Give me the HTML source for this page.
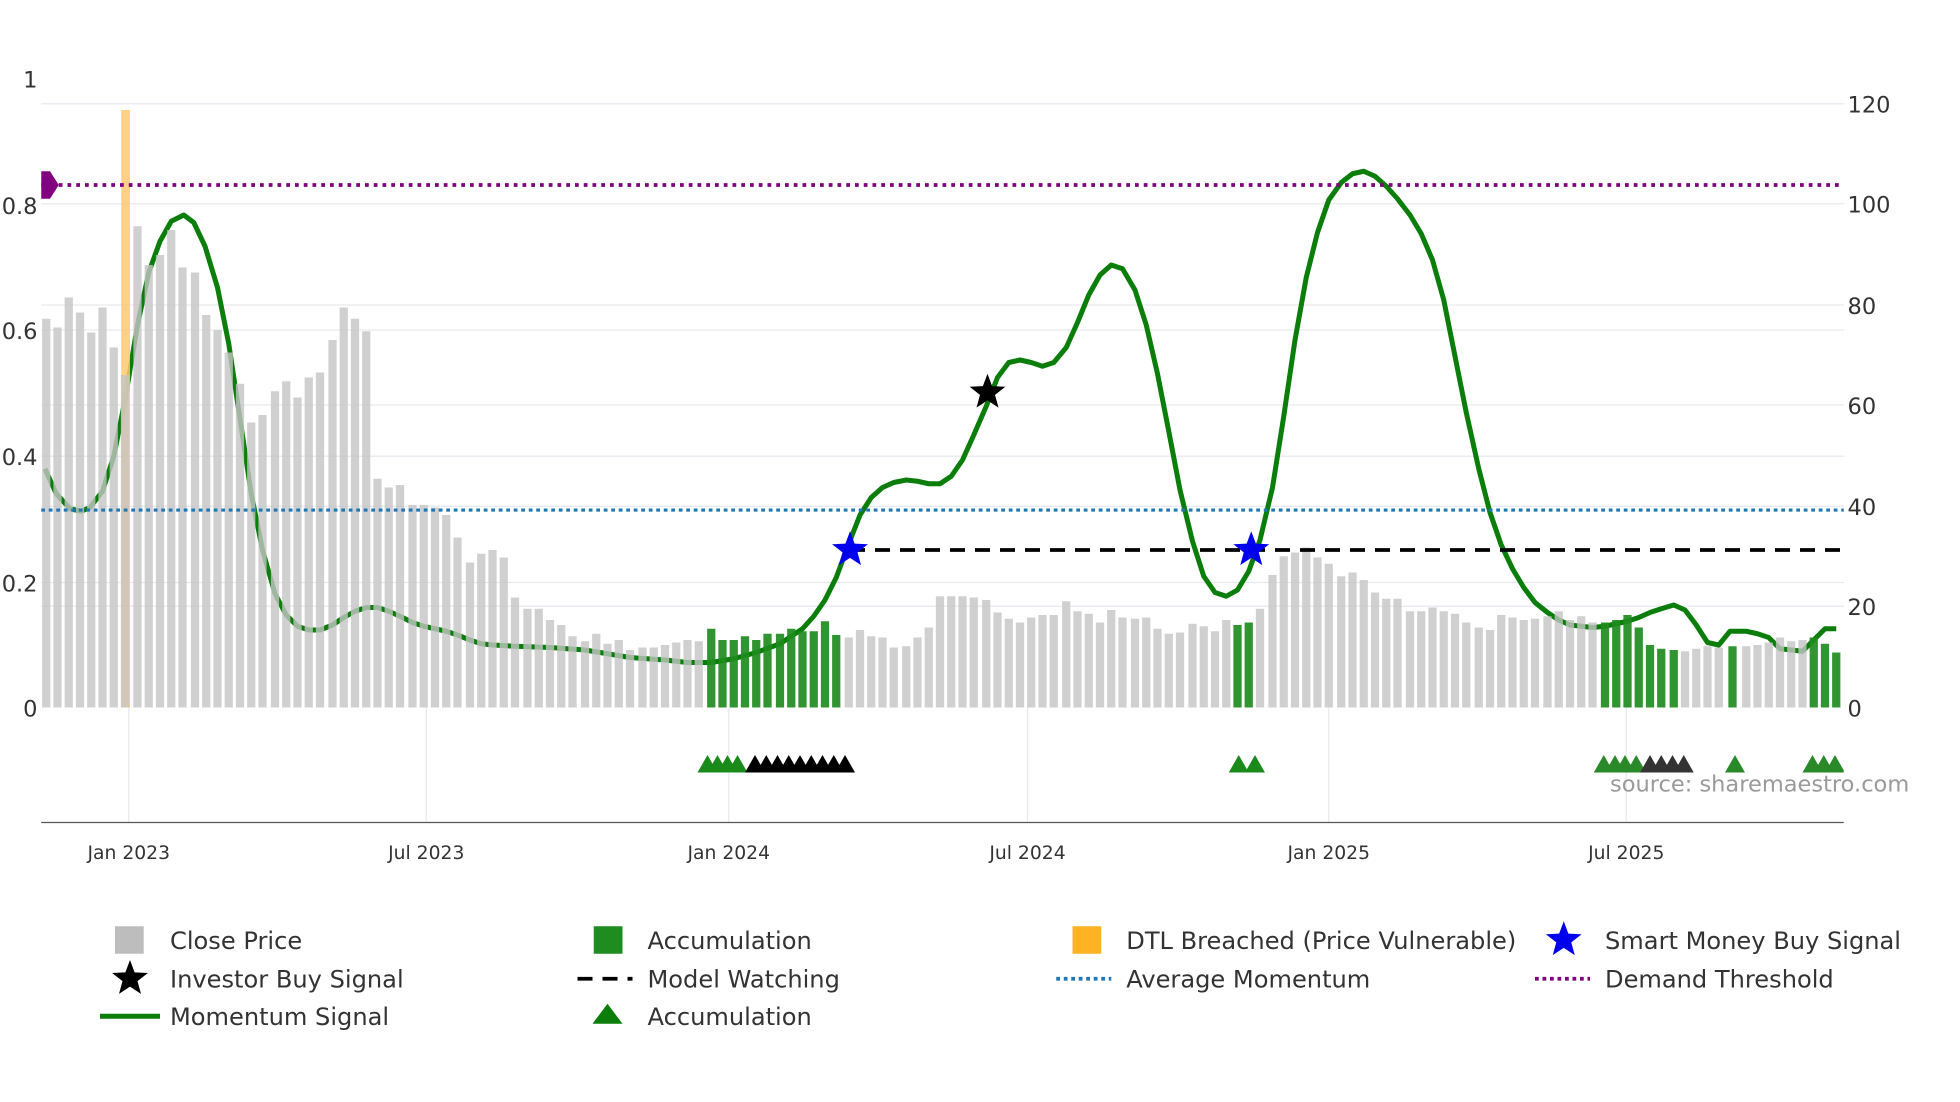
<!DOCTYPE html>
<html><head><meta charset="utf-8"><style>
html,body{margin:0;padding:0;background:#fff;width:1960px;height:1102px;overflow:hidden}
svg{display:block}
text{font-family:"DejaVu Sans","Liberation Sans",sans-serif;fill:#333}
</style></head><body>
<svg id="s" width="1960" height="1102" viewBox="0 0 1568 881.6" preserveAspectRatio="none" xmlns="http://www.w3.org/2000/svg">
<defs><clipPath id="pc"><rect x="33" y="0" width="1442" height="700"/></clipPath></defs>
<g stroke="#e6e9ee" stroke-width="1">
<line x1="33" x2="1475" y1="83" y2="83"/><line x1="33" x2="1475" y1="163" y2="163"/><line x1="33" x2="1475" y1="244" y2="244"/><line x1="33" x2="1475" y1="324" y2="324"/><line x1="33" x2="1475" y1="405" y2="405"/><line x1="33" x2="1475" y1="485" y2="485"/>
<line x1="33" x2="1475" y1="264" y2="264"/><line x1="33" x2="1475" y1="365" y2="365"/><line x1="33" x2="1475" y1="466" y2="466"/>
<line x1="103" x2="103" y1="566" y2="658"/><line x1="341" x2="341" y1="566" y2="658"/><line x1="583" x2="583" y1="566" y2="658"/><line x1="822" x2="822" y1="566" y2="658"/><line x1="1063" x2="1063" y1="566" y2="658"/><line x1="1301" x2="1301" y1="566" y2="658"/>
</g>
<g id="line"></g>
<rect x="97" y="88" width="7" height="478" fill="#ffc870" opacity="0.85"/>
<g id="bars"></g>
<line x1="33" x2="1475" y1="148" y2="148" stroke="#800080" stroke-width="3" stroke-dasharray="3 4"/>
<polygon points="33,137 40,137 47,148 40,159 33,159" fill="#800080"/>
<line x1="33" x2="1475" y1="408" y2="408" stroke="#1f77b4" stroke-width="2.5" stroke-dasharray="3 3"/>
<line x1="680" x2="1475" y1="440" y2="440" stroke="#000" stroke-width="3" stroke-dasharray="12 8"/>
<g id="marks"></g>
<g id="tris" clip-path="url(#pc)"></g>
<line x1="33" x2="1475" y1="658" y2="658" stroke="#555" stroke-width="1"/>
<g font-size="18" text-anchor="end">
<text x="30" y="70">1</text><text x="30" y="171">0.8</text><text x="30" y="271">0.6</text><text x="30" y="372">0.4</text><text x="30" y="473">0.2</text><text x="30" y="573">0</text>
</g>
<g font-size="18">
<text x="1478" y="90">120</text><text x="1478" y="170">100</text><text x="1478" y="251">80</text><text x="1478" y="331">60</text><text x="1478" y="412">40</text><text x="1478" y="492">20</text><text x="1478" y="573">0</text>
</g>
<g font-size="15" text-anchor="middle">
<text x="103" y="687">Jan 2023</text><text x="341" y="687">Jul 2023</text><text x="583" y="687">Jan 2024</text><text x="822" y="687">Jul 2024</text><text x="1063" y="687">Jan 2025</text><text x="1301" y="687">Jul 2025</text>
</g>
<text x="1288" y="633" font-size="18" style="fill:#9a9a9a">source: sharemaestro.com</text>
<g font-size="19.3">
<rect x="92" y="741" width="23" height="22" fill="#bdbdbd"/><text x="136" y="759">Close Price</text>
<rect x="475" y="741" width="23" height="22" fill="#1e8c1e"/><text x="518" y="759">Accumulation</text>
<rect x="858" y="741" width="23" height="22" fill="#ffb224"/><text x="901" y="759">DTL Breached (Price Vulnerable)</text>
<text x="1284" y="759">Smart Money Buy Signal</text>
<text x="136" y="790">Investor Buy Signal</text>
<line x1="462" x2="506" y1="783" y2="783" stroke="#000" stroke-width="3" stroke-dasharray="12 8"/><text x="518" y="790">Model Watching</text>
<line x1="845" x2="889" y1="783" y2="783" stroke="#1f77b4" stroke-width="3" stroke-dasharray="3 3"/><text x="901" y="790">Average Momentum</text>
<line x1="1228" x2="1272" y1="783" y2="783" stroke="#800080" stroke-width="3" stroke-dasharray="3 3"/><text x="1284" y="790">Demand Threshold</text>
<line x1="80" x2="128" y1="813" y2="813" stroke="#0a7d0a" stroke-width="4"/><text x="136" y="820">Momentum Signal</text>
<polygon points="474,819 486,803 498,819" fill="#0a7d0a"/><text x="518" y="820">Accumulation</text>
</g>
</svg>
<script>
const NS="http://www.w3.org/2000/svg";
function el(p,t,a){const e=document.createElementNS(NS,t);for(const k in a)e.setAttribute(k,a[k]);p.appendChild(e);return e;}
const bars=[[37,255],[46,262],[55,238],[64,250],[73,266],[82,246],[91,278],[100,300],[110,181],[119,212],[128,204],[137,184],[146,214],[156,218],[165,252],[174,264],[183,282],[192,307],[201,338],[210,332],[220,313],[229,305],[238,318],[247,302],[256,298],[266,272],[275,246],[284,255],[293,265],[302,383],[311,390],[320,388],[330,404],[339,404],[348,406],[357,412],[366,430],[376,450],[385,443],[394,440],[403,446],[412,478],[422,487],[431,487],[440,496],[449,500],[458,509],[468,513],[477,507],[486,515],[495,512],[504,520],[514,518],[523,518],[532,516],[541,514],[550,512],[559,513],[569,503,1],[578,512,1],[587,512,1],[596,509,1],[605,512,1],[614,507,1],[624,507,1],[633,503,1],[642,505,1],[651,505,1],[660,497,1],[669,508,1],[679,510],[688,504],[697,509],[706,510],[715,518],[725,517],[734,510],[743,502],[752,477],[761,477],[770,477],[779,478],[789,480],[798,490],[807,495],[816,498],[825,494],[834,492],[843,492],[853,481],[862,489],[871,491],[880,498],[889,488],[898,494],[908,495],[917,494],[926,503],[935,507],[944,506],[954,499],[963,501],[972,505],[981,496],[990,500,1],[999,498,1],[1008,487],[1018,460],[1027,445],[1036,442],[1045,438],[1054,446],[1063,451],[1073,461],[1082,458],[1091,464],[1100,474],[1109,479],[1118,479],[1128,489],[1137,489],[1146,486],[1155,489],[1164,491],[1173,498],[1183,502],[1192,504],[1201,492],[1210,494],[1219,496],[1228,495],[1238,493],[1247,489],[1256,496],[1265,493],[1274,498],[1284,498,1],[1293,496,1],[1302,492,1],[1311,502,1],[1320,516,1],[1329,519,1],[1339,520,1],[1348,521],[1357,519],[1366,517],[1375,518],[1386,517,1],[1397,517],[1406,516],[1415,514],[1424,510],[1433,513],[1442,512],[1451,510,1],[1460,515,1],[1469,522,1]];
const bg=document.getElementById("bars");
bars.forEach(b=>el(bg,"rect",{x:b[0]-3.3,y:b[1],width:6.6,height:566-b[1],fill:b[2]?"#1e8c1e":"#c4c4c4",opacity:b[2]?0.92:0.8}));
const pts=[[36,375],[45,395],[56,407],[65,409],[72,406],[82,393],[91,365],[100,320],[110,260],[119,218],[128,193],[137,177],[147,172],[155,178],[164,197],[174,230],[183,275],[192,335],[201,395],[210,440],[220,475],[229,492],[238,501],[247,504],[256,504],[266,500],[275,494],[284,489],[293,486],[302,486],[311,489],[320,493],[330,498],[339,501],[348,503],[357,505],[366,508],[376,512],[385,515],[394,516],[412,517],[440,518],[468,520],[486,523],[504,526],[532,528],[550,530],[569,530],[587,527],[605,522],[624,515],[642,503],[651,493],[660,480],[669,462],[679,435],[688,412],[697,398],[706,390],[715,386],[725,384],[734,385],[743,387],[752,387],[761,381],[770,368],[779,348],[789,325],[798,302],[807,290],[816,288],[825,290],[834,293],[843,290],[853,278],[862,258],[871,236],[880,220],[889,212],[898,215],[908,232],[917,260],[926,299],[935,345],[944,392],[954,433],[963,461],[972,474],[981,477],[990,472],[999,457],[1008,432],[1018,390],[1027,333],[1036,272],[1045,222],[1054,186],[1063,160],[1073,146],[1082,139],[1091,137],[1100,141],[1109,149],[1118,159],[1128,172],[1137,187],[1146,208],[1155,240],[1164,285],[1173,330],[1183,375],[1192,410],[1201,436],[1210,455],[1219,470],[1228,482],[1238,490],[1247,496],[1256,500],[1265,501],[1274,502],[1284,501],[1293,499],[1302,497],[1311,494],[1320,490],[1329,487],[1339,484],[1348,488],[1357,500],[1366,514],[1375,516],[1384,505],[1397,505],[1406,507],[1415,510],[1424,519],[1433,520],[1442,521],[1451,512],[1460,503],[1469,503]];
el(document.getElementById("line"),"polyline",{points:pts.map(p=>p.join(",")).join(" "),fill:"none",stroke:"#0a7d0a","stroke-width":4,"stroke-linejoin":"round"});
const mk=document.getElementById("marks");
function star(cx,cy,r,f,par){let p=[];for(let i=0;i<10;i++){const a=-Math.PI/2+i*Math.PI/5,rr=i%2?r*0.42:r;p.push((cx+rr*Math.cos(a)).toFixed(1)+","+(cy+rr*Math.sin(a)).toFixed(1));}el(par||mk,"polygon",{points:p.join(" "),fill:f});}
star(680,440,15,"#0000ee");star(1001,440,15,"#0000ee");star(790,314,15,"#000");
const svg=document.getElementById("s");
star(1251,752,15,"#0000ee",svg);star(104,783,15,"#000",svg);
const tg=document.getElementById("tris");
function tri(x,c){el(tg,"polygon",{points:(x-8)+",618 "+x+",604 "+(x+8)+",618",fill:c});}
[566,574,582,590].forEach(x=>tri(x,"#1a8a1a"));
[604,613,622,631,640,649,658,667,676].forEach(x=>tri(x,"#000"));
[991,1004].forEach(x=>tri(x,"#1a8a1a"));
[1283,1292,1300,1309].forEach(x=>tri(x,"#2a8a2a"));
[1320,1329,1338,1347].forEach(x=>tri(x,"#333"));
[1388,1450,1459,1468].forEach(x=>tri(x,"#2a8a2a"));
</script>
</body></html>
